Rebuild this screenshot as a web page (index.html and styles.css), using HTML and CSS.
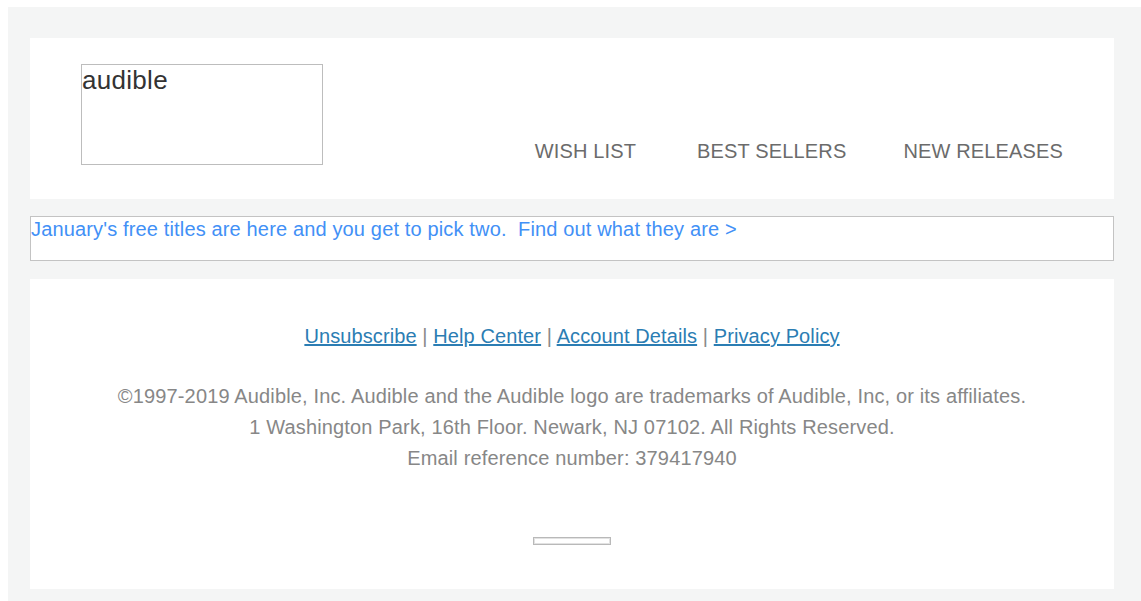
FILE: index.html
```html
<!DOCTYPE html>
<html lang="en">
<head>
<meta charset="utf-8">
<title>Audible</title>
<link rel="stylesheet" href="styles.css">
</head>
<body>
<div class="page">
  <header class="card masthead">
    <div class="logo">audible</div>
    <nav class="topnav">
      <a href="#">WISH LIST</a>
      <a href="#">BEST SELLERS</a>
      <a href="#">NEW RELEASES</a>
    </nav>
  </header>

  <div class="promo">
    <a href="#">January's free titles are here and you get to pick two.&nbsp; Find out what they are &gt;</a>
  </div>

  <footer class="card footer">
    <p class="links">
      <a href="#">Unsubscribe</a> <span class="sep">|</span>
      <a href="#">Help Center</a> <span class="sep">|</span>
      <a href="#">Account Details</a> <span class="sep">|</span>
      <a href="#">Privacy Policy</a>
    </p>
    <p class="legal">
      ©1997-2019 Audible, Inc. Audible and the Audible logo are trademarks of Audible, Inc, or its affiliates.<br>
      1 Washington Park, 16th Floor. Newark, NJ 07102. All Rights Reserved.<br>
      Email reference number: 379417940
    </p>
    <div class="pixel"></div>
  </footer>
</div>
</body>
</html>
```

FILE: styles.css
```css
html, body {
  margin: 0;
  padding: 0;
  background: #ffffff;
}

body {
  padding: 7px 0 0 8px;
  font-family: "Liberation Sans", Arial, sans-serif;
}

.page {
  background: #f4f5f5;
  padding: 31px 27px 12px 22px;
  display: flex;
  flex-direction: column;
  gap: 17px;
}

.card {
  background: #ffffff;
}

/* top bar: logo box + navigation */
.masthead {
  height: 161px;
  box-sizing: border-box;
  padding: 26px 51px 0 51px;
  display: flex;
  justify-content: space-between;
  align-items: flex-start;
}

.logo {
  width: 242px;
  height: 101px;
  box-sizing: border-box;
  border: 1px solid #bdbdbd;
  font-size: 26px;
  line-height: 30px;
  letter-spacing: 0.3px;
  color: #333333;
}

.topnav {
  display: flex;
  margin-top: 75px;
}

.topnav a {
  font-size: 20px;
  line-height: 24px;
  letter-spacing: 0.15px;
  color: #6b6b6b;
  text-decoration: none;
}

.topnav a:nth-child(2) {
  margin-left: 61px;
}

.topnav a:nth-child(3) {
  margin-left: 57px;
}

/* promo strip */
.promo {
  height: 45px;
  box-sizing: border-box;
  border: 1px solid #c3c3c3;
  background: #ffffff;
}

.promo a {
  display: block;
  font-size: 20px;
  line-height: 24px;
  letter-spacing: 0.15px;
  color: #4290f6;
  text-decoration: none;
}

/* footer */
.footer {
  margin-top: 1px;
  height: 310px;
  box-sizing: border-box;
  padding-top: 45px;
  text-align: center;
  display: flex;
  flex-direction: column;
  align-items: center;
}

.links {
  margin: 0;
  font-size: 20px;
  line-height: 24px;
  letter-spacing: 0.1px;
}

.links a {
  color: #2b7db3;
  text-decoration: underline;
}

.sep {
  color: #8a8a8a;
}

.legal {
  margin: 33px 0 0;
  font-size: 20px;
  line-height: 31px;
  letter-spacing: 0.15px;
  color: #878787;
}

.pixel {
  margin-top: 63px;
  width: 78px;
  height: 8px;
  box-sizing: border-box;
  border: 1px solid #b9b9b9;
  box-shadow: inset 0 0 0 1px #e2e2e2;
}
```
